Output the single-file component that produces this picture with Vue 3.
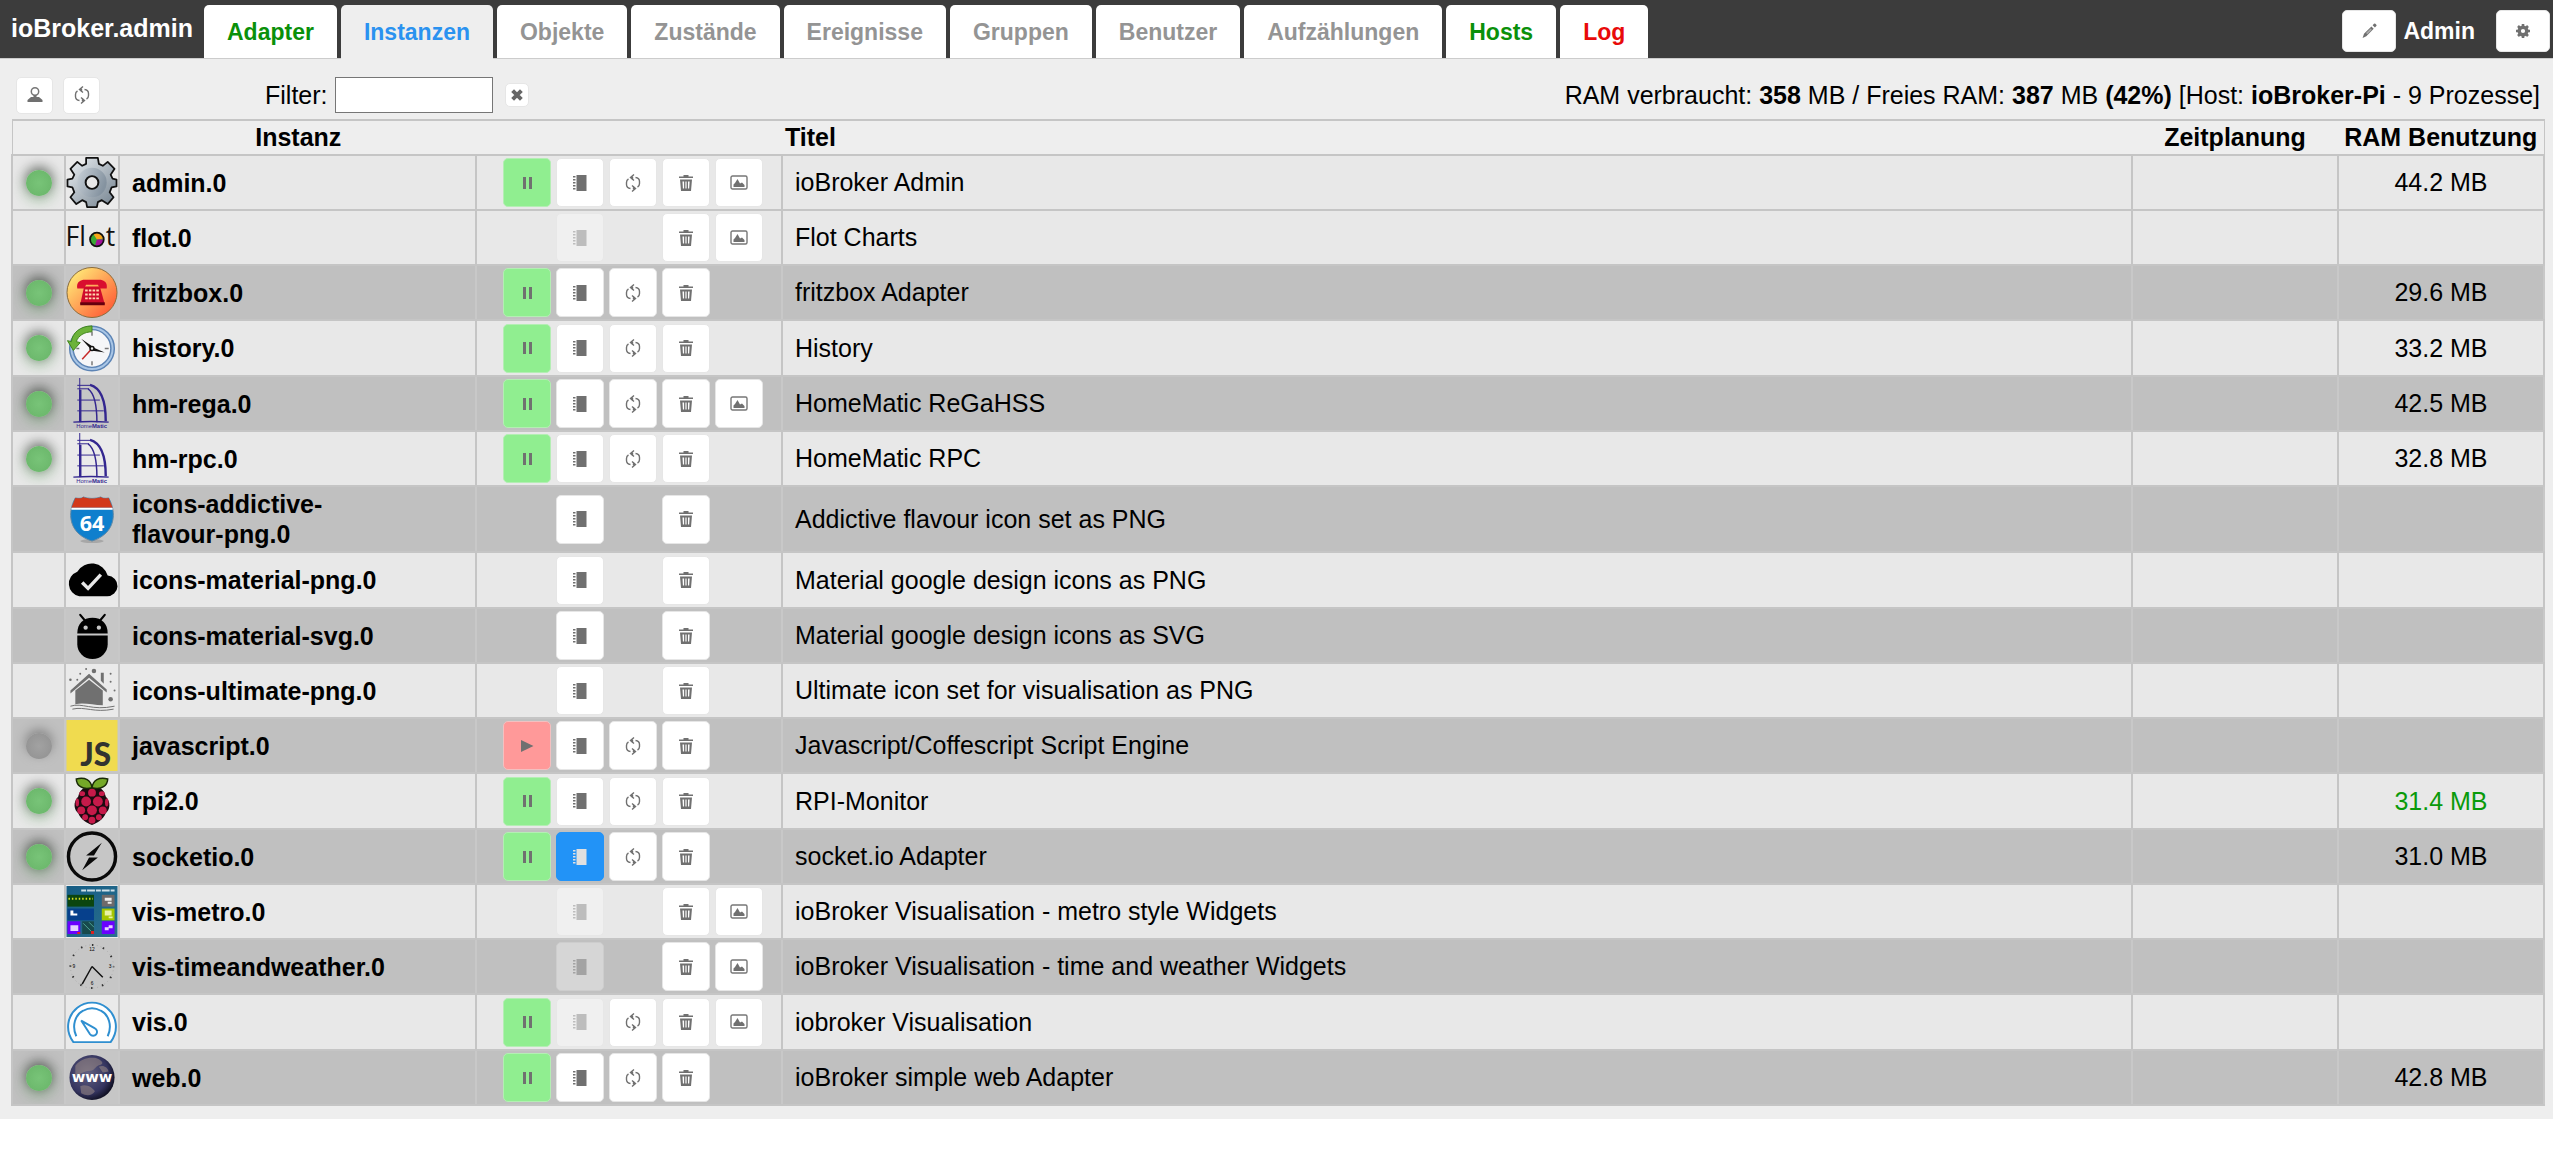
<template>
    <div class="app">
        <header class="topbar">
            <div class="brand">ioBroker.admin</div>
            <nav class="tabs">
                <a v-for="t in tabs" :key="t.name" href="#" class="tab" :class="t.state">{{ t.name }}</a>
            </nav>
            <div class="user">
                <button class="btn top-btn" title="Bearbeiten">
                    <svg class="ico" viewBox="0 0 16 16">
                        <path d="M11.6 2.2L13 .8a1 1 0 0 1 1.4 0l.9.9a1 1 0 0 1 0 1.4l-1.4 1.4zM10.4 3.4l2.3 2.3-7.4 7.5L1.6 15 3 10.8z"/>
                        <path d="M5 10l1.300 1.300 4.500-4.500-1.200-1.200z" fill="#aaa"/>
                    </svg>
                </button>
                <span class="user-name">Admin</span>
                <button class="btn top-btn" title="Einstellungen">
                    <svg class="ico" viewBox="0 0 16 16">
                        <circle cx="8" cy="8" r="3.8" fill="none" stroke="#707070" stroke-width="3.4"/>
                        <path d="M8 1v2.500M8 12.500V15M1 8h2.500M12.500 8H15M3 3l2 2M11 11l2 2M13 3l-2 2M5 11l-2 2" stroke="#707070" stroke-width="2.6"/>
                    </svg>
                </button>
            </div>
        </header>

        <main class="content">
            <div class="toolbar">
                <button class="btn tool-btn" title="Expertenmodus">
                    <svg class="ico" viewBox="0 0 16 16">
                        <circle cx="8" cy="4.5" r="3.7" fill="none" stroke="#777" stroke-width="1.5"/>
                        <path d="M6.500 8h3v2.500h-3zM.5 15v-2L4 10h8l3.500 3v2z"/>
                    </svg>
                </button>
                <button class="btn tool-btn" title="Aktualisieren">
                    <svg class="ico" viewBox="0 0 16 16"><path class="line" :d="refreshPath"/></svg>
                </button>
                <label class="filter-label" for="filter">Filter:</label>
                <input id="filter" v-model="filter" class="filter" type="text">
                <button class="btn clear-btn" title="Filter löschen" @click="filter = ''">
                    <svg class="ico" viewBox="0 0 16 16"><path d="M3 3l10 10M13 3L3 13" stroke="#666" stroke-width="4.5"/></svg>
                </button>
                <div class="ram-info">
                    RAM verbraucht: <b>358</b> MB / Freies RAM: <b>387</b> MB <b>(42%)</b> [Host: <b>ioBroker-Pi</b> - 9 Prozesse]
                </div>
            </div>

            <table class="grid">
                <colgroup>
                    <col class="c-led"><col class="c-icon"><col class="c-name"><col class="c-btns"><col><col class="c-ram"><col class="c-ram">
                </colgroup>
                <thead>
                    <tr>
                        <th colspan="4" class="th-inst">Instanz</th>
                        <th class="th-title">Titel</th>
                        <th>Zeitplanung</th>
                        <th>RAM Benutzung</th>
                    </tr>
                </thead>
                <tbody>
                    <tr v-for="r in visibleRows" :key="r.id" :class="{ dark: r.dark }">
                        <td class="led-cell">
                            <span v-if="r.led" class="led" :class="r.led"></span>
                        </td>
                        <td class="icon-cell">
                            <svg class="logo" viewBox="0 0 52 52">
                                <g v-if="r.icon === 'gear'">
                                    <path d="M20 1h12l1 6 4 2 5-4 7 7-4 6 2 4 4 1v7l-5 1-2 5 4 5-6 7-6-4-4 2-1 5H21l-1-5-4-2-6 4-6-7 4-5-2-5-5-1v-7l5-1 2-4-4-6 7-7 5 4 4-2z" fill="url(#gearFill)" stroke="#111" stroke-width="1.8" stroke-linejoin="round"/>
                                    <circle cx="26" cy="26" r="15" fill="url(#gearDisc)"/>
                                    <circle cx="26" cy="26" r="6.5" fill="#e8e8e8" stroke="#111" stroke-width="2"/>
                                </g>
                                <g v-else-if="r.icon === 'flot'">
                                    <text x="-1" y="35" font-size="27" class="thin">Fl</text>
                                    <text x="40" y="35" font-size="27" class="thin">t</text>
                                    <circle cx="31" cy="28" r="7" fill="#39a935"/>
                                    <path d="M31 28L27 22a7 7 0 0 1 11 5z" fill="#f9a61a"/>
                                    <path d="M31 28h7a7 7 0 0 1-9 6.700z" fill="#a3119b"/>
                                    <circle cx="31" cy="28" r="7" fill="none" stroke="#111" stroke-width="1.8"/>
                                </g>
                                <g v-else-if="r.icon === 'phone'">
                                    <circle cx="26" cy="26" r="25.5" fill="url(#phoneFill)" stroke="#8a6a3a"/>
                                    <path d="M18 20h16l5 18H14z" fill="#cf0c2c"/>
                                    <path d="M14 36h25v3H14z" fill="#65000e"/>
                                    <path d="M11 22c-1-6 2-8 6-9h18c4 1 7 3 6 9h-7l-2-4H20l-2 4z" fill="#d90f2f"/>
                                    <path d="M19 24h14M19 28h14M19 32h14" stroke="#ffd9b0" stroke-width="2" stroke-dasharray="2.6 1.2"/>
                                </g>
                                <g v-else-if="r.icon === 'history'">
                                    <circle cx="26" cy="26" r="21" fill="#f5f6f8" stroke="#5c84b5" stroke-width="5"/>
                                    <circle cx="26" cy="26" r="21" fill="none" stroke="#a9c6e6" stroke-width="2"/>
                                    <path d="M26 3C14 3 6 10 5 19l-4-1 6 10 7-8-4-1c2-6 8-10 16-10z" fill="#6cb33a" stroke="#3e8419"/>
                                    <path d="M26 9v4M26 39v4M39 26h4M10 26h3" stroke="#777" stroke-width="1.5"/>
                                    <path d="M26 26L16 37" stroke="#c62828" stroke-width="1.5"/>
                                    <path d="M15 16l13 9-2 3zM25 24l14 6-14-2z" fill="#111"/>
                                    <circle cx="26" cy="26" r="2" fill="#eee" stroke="#111" stroke-width="1.5"/>
                                </g>
                                <g v-else-if="r.icon === 'homematic'" fill="none" stroke="#33268f">
                                    <path d="M13.500 0v45" stroke-width="1"/>
                                    <path d="M14 12v33" stroke-width="2.5"/>
                                    <path d="M11 7.500h14M11 11h12M11 22.500h23M11 33.500h27"/>
                                    <path d="M24 7c11 3 16 17 16 37" stroke-width="2.5"/>
                                    <path d="M22 11c7 5 9 17 9 34" stroke-width="1.5"/>
                                    <path d="M7 45c12-1 24-1 36 0" stroke-width="1.5"/>
                                    <text x="10" y="50.5" font-size="6" fill="#33268f" stroke="none">Home<tspan font-weight="bold">Matic</tspan></text>
                                </g>
                                <g v-else-if="r.icon === 'shield'">
                                    <ellipse cx="26" cy="48" rx="12" ry="2" fill="#888" opacity=".5"/>
                                    <path d="M9 4c5 1 7 0 8-1 4 2 14 2 18 0 1 1 4 2 8 1 8 14 8 36-17 44C1 40 1 18 9 4z" fill="#0f7fcd" stroke="#5f87a3"/>
                                    <path d="M9 4c5 1 7 0 8-1 4 2 14 2 18 0 1 1 4 2 8 1l4 10H5z" fill="#d2381b"/>
                                    <path d="M5 15h42" stroke="#fff" stroke-width="2"/>
                                    <text x="26" y="38" font-size="22" text-anchor="middle" class="num">64</text>
                                </g>
                                <g v-else-if="r.icon === 'cloud'">
                                    <path d="M42 21A17 17 0 0 0 11 17 13 13 0 0 0 13 42h28a10.500 10.500 0 0 0 1-21z"/>
                                    <path d="M16 28l6 6 13-14" fill="none" stroke="#e8e8e8" stroke-width="3.5"/>
                                </g>
                                <g v-else-if="r.icon === 'android'">
                                    <path d="M11 26h31v9a15.500 15 0 0 1-31 0z"/>
                                    <path d="M11 24c0-10 6-16 15.500-16S42 14 42 24z"/>
                                    <path d="M19 11l-5-6M34 11l5-6" stroke="#000" stroke-width="2.2" stroke-linecap="round"/>
                                    <circle cx="19.5" cy="18" r="2.2" fill="#c8c8c8"/>
                                    <circle cx="33" cy="18" r="2.2" fill="#c8c8c8"/>
                                </g>
                                <g v-else-if="r.icon === 'house'" fill="#707070">
                                    <path d="M23 15L9 26v14c9-2 18 1 28 1V26z"/>
                                    <path d="M4 26L23 9l18 16v3L23 13 4 29zM35 8h3v11l-3-3z"/>
                                    <path d="M4 42c12-4 22 5 45 0M6 45c13-3 22 4 42 0" fill="none" stroke="#707070"/>
                                    <circle cx="28" cy="6" r="2.3"/><circle cx="45" cy="35" r="2.3"/>
                                    <circle cx="4" cy="15" r="1.3"/><circle cx="11" cy="15" r="1"/><circle cx="14" cy="9" r="1"/>
                                    <circle cx="20" cy="4" r="1"/><circle cx="45" cy="9" r="1"/><circle cx="45" cy="17" r="1"/><circle cx="49" cy="26" r="1"/>
                                </g>
                                <g v-else-if="r.icon === 'js'">
                                    <path d="M0 0h52v52H0z" fill="#f0db4f"/>
                                    <text x="14" y="47" font-size="32" class="js">JS</text>
                                </g>
                                <g v-else-if="r.icon === 'rpi'">
                                    <path d="M26 10c8 0 13 5 14 11 6 6 4 14 0 17-3 7-9 10-14 12-5-2-11-5-14-12-4-3-6-11 0-17 1-6 6-11 14-11z" fill="#1b0a10"/>
                                    <path d="M26 12C16 15 10 9 10 3c9-2 15 1 16 9zM26 12c10 3 16-3 16-9-9-2-15 1-16 9z" fill="#75a928" stroke="#1b2b08" stroke-width="1.5"/>
                                    <g fill="#c51a4a">
                                        <circle cx="26" cy="17" r="4"/><circle cx="20" cy="26" r="5"/><circle cx="32" cy="26" r="5"/>
                                        <circle cx="26" cy="35" r="5"/><circle cx="15" cy="35" r="4"/><circle cx="37" cy="35" r="4"/>
                                        <circle cx="26" cy="45" r="3.5"/><circle cx="19" cy="42" r="3"/><circle cx="33" cy="42" r="3"/>
                                        <ellipse cx="16" cy="18" rx="3" ry="2.5"/><ellipse cx="36" cy="18" rx="3" ry="2.5"/>
                                        <ellipse cx="11" cy="27" rx="1.8" ry="4"/><ellipse cx="41" cy="27" rx="1.8" ry="4"/>
                                    </g>
                                </g>
                                <g v-else-if="r.icon === 'socket'">
                                    <circle cx="26" cy="26" r="24" fill="none" stroke="#0a0a0a" stroke-width="3.5"/>
                                    <path d="M36 12L20 25h8zM16 40l16-13h-9z" fill="#0a0a0a"/>
                                </g>
                                <g v-else-if="r.icon === 'metro'">
                                    <path d="M0 0h52v52H0z" fill="url(#metroFill)"/>
                                    <path d="M15 4.500h34" stroke="#cfe0e8" stroke-width="2" stroke-dasharray="5 1 8 1"/>
                                    <path d="M1 9h27v12H1z" fill="#0b4510"/>
                                    <path d="M2 13h25" stroke="#d8e020" stroke-width="2" stroke-dasharray="1.5 2"/>
                                    <path d="M1 23h27v12H1z" fill="#06408c"/>
                                    <path d="M4 25h3v3h4v2H4z" fill="#fff"/>
                                    <path d="M36 9h13v12H36z" fill="#6f6a6a"/>
                                    <path d="M39 12h7v3h-7zM42 16h4v2h-4z" fill="#eee"/>
                                    <path d="M36 23h13v12H36z" fill="#a4c400"/>
                                    <path d="M39 25h7v5h-7zM43 31h4v2h-4z" fill="#e9f2a5"/>
                                    <path d="M1 36h13v13H1zM36 36h13v13H36z" fill="#6a00ff"/>
                                    <path d="M4 40h8v6H4zM39 42h4v3h-4zM43 40h4v3h-4z" fill="#e4d2ff"/>
                                    <path d="M16 36h12v13H16z" fill="#174a4c"/>
                                    <path d="M17 38l9 9M23 37l5 5" stroke="#4fa598"/>
                                    <path d="M11 47h3v2h-3zM25 46h3v3h-3z" fill="#e02020"/>
                                </g>
                                <g v-else-if="r.icon === 'clock'">
                                    <circle cx="26" cy="26" r="22" fill="none" stroke="#aaa" stroke-dasharray="1 3"/>
                                    <circle cx="26" cy="26" r="22" fill="none" stroke="#333" stroke-width="2" stroke-dasharray="1.5 10.02" stroke-dashoffset="0.75"/>
                                    <path d="M26 26L16 44M26 26l11 11" stroke="#111" stroke-width="1.5"/>
                                    <text x="26" y="10" font-size="5" text-anchor="middle">12</text>
                                    <text x="26" y="45" font-size="5" text-anchor="middle">6</text>
                                    <text x="6" y="28" font-size="5">9</text>
                                    <text x="43" y="28" font-size="5">3</text>
                                </g>
                                <g v-else-if="r.icon === 'gauge'" fill="none" stroke="#2f8fd0" stroke-width="2">
                                    <path d="M7 46C-2 34 1 19 11 11a24 24 0 0 1 30 0c10 8 13 23 4 35z" fill="#fff"/>
                                    <path d="M10 40C5 29 9 18 17 14a18 18 0 0 1 18 0c8 4 12 15 7 26"/>
                                    <path d="M15 24l14 8a4 4 0 1 1-5 6z"/>
                                </g>
                                <g v-else-if="r.icon === 'www'">
                                    <circle cx="26" cy="26" r="23" fill="url(#globeFill)"/>
                                    <path d="M9 14c5-7 13-9 21-8 5 2 9 5 5 7-6 1-5 5-10 6-5 0-10 2-16 6zM33 15c5-2 9 1 10 5l-6 1zM14 35c6-3 12 1 15 5-3 5-9 5-14 2z" fill="#9b8b85" opacity=".55"/>
                                    <text x="26" y="31" font-size="15" text-anchor="middle" class="www">www</text>
                                </g>
                            </svg>
                        </td>
                        <td class="name">{{ r.id }}</td>
                        <td>
                            <div class="btns">
                                <template v-for="(b, i) in r.btns" :key="i">
                                    <span v-if="b === '-'" class="slot"></span>
                                    <button v-else class="btn row-btn" :class="btnTypes[b].cls" :disabled="b === 'd'" :title="btnTypes[b].title">
                                        <svg class="ico" viewBox="0 0 16 16">
                                            <path v-if="btnTypes[b].icon === 'pause'" d="M4 2h3v12H4zM10 2h3v12h-3z"/>
                                            <path v-else-if="btnTypes[b].icon === 'play'" d="M2 2l12.500 6L2 14z"/>
                                            <path v-else-if="btnTypes[b].icon === 'book'" d="M4.500 0h10v16h-10zM1 1h2.500v1.500H1zM1 4h2.500v1.500H1zM1 7h2.500v1.500H1zM1 10h2.500v1.500H1zM1 13h2.500v1.500H1z"/>
                                            <path v-else-if="btnTypes[b].icon === 'refresh'" class="line" :d="refreshPath"/>
                                            <path v-else-if="btnTypes[b].icon === 'trash'" fill-rule="evenodd" d="M1 1.500h4.500V0h5v1.500H15V3H1zM2 4.500h12L13 16H3zM4.500 6.500l.4 7h1.200v-7zM7.400 6.500v7h1.200v-7zM10 6.500v7h1.200l.4-7z"/>
                                            <template v-else>
                                                <rect x="0" y="1" width="16" height="13" rx="1.5" fill="none" stroke="#777" stroke-width="1.4"/>
                                                <path d="M2.500 12V9.500L4 8l2.500-4 2.500 4.500 2-1L13.500 10v2z"/>
                                            </template>
                                        </svg>
                                    </button>
                                </template>
                            </div>
                        </td>
                        <td class="title">{{ r.title }}</td>
                        <td></td>
                        <td class="ram" :class="{ changed: r.changed }">{{ r.ram }}</td>
                    </tr>
                </tbody>
            </table>
        </main>

        <svg class="defs" width="0" height="0" aria-hidden="true">
            <defs>
                <linearGradient id="gearFill" x1="0" y1="0" x2="1" y2="1">
                    <stop offset="0" stop-color="#eef2f5"/><stop offset="1" stop-color="#71808d"/>
                </linearGradient>
                <linearGradient id="gearDisc" x1="0" y1="0" x2="1" y2="0.4">
                    <stop offset="0" stop-color="#c9d1d8"/><stop offset="1" stop-color="#8593a0"/>
                </linearGradient>
                <linearGradient id="phoneFill" x1="0" y1="0" x2="1" y2="1">
                    <stop offset="0.15" stop-color="#ffe173"/><stop offset="0.9" stop-color="#ff5a35"/>
                </linearGradient>
                <linearGradient id="metroFill" x1="0" y1="0" x2="1" y2="1">
                    <stop offset="0" stop-color="#155c84"/><stop offset="1" stop-color="#2a6f8e"/>
                </linearGradient>
                <radialGradient id="globeFill" cx="0.4" cy="0.4" r="0.65">
                    <stop offset="0" stop-color="#626080"/><stop offset="0.7" stop-color="#34345f"/><stop offset="1" stop-color="#0c0c1c"/>
                </radialGradient>
            </defs>
        </svg>
    </div>
</template>

<script setup>
import {computed, ref} from 'vue'

const filter = ref('')

const tabs = [
    {name: 'Adapter', state: 'ok'},
    {name: 'Instanzen', state: 'active'},
    {name: 'Objekte'},
    {name: 'Zustände'},
    {name: 'Ereignisse'},
    {name: 'Gruppen'},
    {name: 'Benutzer'},
    {name: 'Aufzählungen'},
    {name: 'Hosts', state: 'ok'},
    {name: 'Log', state: 'error'}
]

const refreshPath = 'M9 -.5L5.500 2.500 9 5.500M6 2.500H7.500V5M10.500 2.500Q14.500 3 14.500 6.500V8.500Q14.500 11 12.500 12M7 10.500l3.500 3L7 16.500M10 13.500H8.500V11M5.500 13.500Q1.500 13 1.500 9.500V7.500Q1.500 5 3.500 4'

// p = pause, s = start, c = config, d = config disabled, h = config hovered,
// r = reload, t = delete, l = open link, - = empty slot
const btnTypes = {
    p: {icon: 'pause', cls: 'green', title: 'Stoppen'},
    s: {icon: 'play', cls: 'red', title: 'Starten'},
    c: {icon: 'book', title: 'Konfigurieren'},
    d: {icon: 'book', cls: 'disabled', title: 'Konfigurieren'},
    h: {icon: 'book', cls: 'blue', title: 'Konfigurieren'},
    r: {icon: 'refresh', title: 'Neu starten'},
    t: {icon: 'trash', title: 'Löschen'},
    l: {icon: 'image', title: 'Öffnen'}
}

const rows = [
    {id: 'admin.0', icon: 'gear', led: 'on', btns: 'pcrtl', title: 'ioBroker Admin', ram: '44.2 MB'},
    {id: 'flot.0', icon: 'flot', btns: '-d-tl', title: 'Flot Charts'},
    {id: 'fritzbox.0', icon: 'phone', led: 'on', btns: 'pcrt', title: 'fritzbox Adapter', ram: '29.6 MB', dark: true},
    {id: 'history.0', icon: 'history', led: 'on', btns: 'pcrt', title: 'History', ram: '33.2 MB'},
    {id: 'hm-rega.0', icon: 'homematic', led: 'on', btns: 'pcrtl', title: 'HomeMatic ReGaHSS', ram: '42.5 MB', dark: true},
    {id: 'hm-rpc.0', icon: 'homematic', led: 'on', btns: 'pcrt', title: 'HomeMatic RPC', ram: '32.8 MB'},
    {id: 'icons-addictive-flavour-png.0', icon: 'shield', btns: '-c-t', title: 'Addictive flavour icon set as PNG', dark: true},
    {id: 'icons-material-png.0', icon: 'cloud', btns: '-c-t', title: 'Material google design icons as PNG'},
    {id: 'icons-material-svg.0', icon: 'android', btns: '-c-t', title: 'Material google design icons as SVG', dark: true},
    {id: 'icons-ultimate-png.0', icon: 'house', btns: '-c-t', title: 'Ultimate icon set for visualisation as PNG'},
    {id: 'javascript.0', icon: 'js', led: 'off', btns: 'scrt', title: 'Javascript/Coffescript Script Engine', dark: true},
    {id: 'rpi2.0', icon: 'rpi', led: 'on', btns: 'pcrt', title: 'RPI-Monitor', ram: '31.4 MB', changed: true},
    {id: 'socketio.0', icon: 'socket', led: 'on', btns: 'phrt', title: 'socket.io Adapter', ram: '31.0 MB', dark: true},
    {id: 'vis-metro.0', icon: 'metro', btns: '-d-tl', title: 'ioBroker Visualisation - metro style Widgets'},
    {id: 'vis-timeandweather.0', icon: 'clock', btns: '-d-tl', title: 'ioBroker Visualisation - time and weather Widgets', dark: true},
    {id: 'vis.0', icon: 'gauge', btns: 'pdrtl', title: 'iobroker Visualisation'},
    {id: 'web.0', icon: 'www', led: 'on', btns: 'pcrt', title: 'ioBroker simple web Adapter', ram: '42.8 MB', dark: true}
]

const visibleRows = computed(() => {
    const f = filter.value.trim().toLowerCase()
    if (!f) return rows
    return rows.filter(r => r.id.toLowerCase().includes(f) || r.title.toLowerCase().includes(f))
})
</script>

<style>
body {
    margin: 0;
    background: #ffffff;
}
</style>

<style scoped>
.app {
    font-family: "Liberation Sans", Arial, sans-serif;
    font-size: 25px;
    color: #000;
    background: #eeeeee;
}

.topbar {
    display: flex;
    height: 58px;
    background: #3c3c3c;
    border-bottom: 1px solid #cccccc;
}

.brand {
    padding: 14px 11px 0 11px;
    line-height: 28px;
    font-weight: bold;
    color: #fff;
}

.tabs {
    display: flex;
    gap: 4px;
    padding-top: 5px;
}

.tab {
    box-sizing: border-box;
    height: 53px;
    padding: 0 23px;
    line-height: 54px;
    border-radius: 5px 5px 0 0;
    background: #fff;
    color: #949494;
    font-size: 23px;
    font-weight: bold;
    text-decoration: none;
}

.tab.active {
    height: 54px;
    background: #eee;
    color: #2a92f0;
}

.tab.ok {
    color: #0a900a;
}

.tab.error {
    color: #e80a0a;
}

.user {
    display: flex;
    align-items: center;
    margin-left: auto;
    padding-right: 3px;
    padding-top: 4px;
}

.user-name {
    margin: 0 21px 0 7px;
    color: #fff;
    font-size: 23px;
    font-weight: bold;
}

.btn {
    display: flex;
    align-items: center;
    justify-content: center;
    box-sizing: border-box;
    padding: 0;
    border: 1px solid #e6e6e6;
    border-radius: 5px;
    background: #fff;
}

.ico {
    width: 16px;
    height: 16px;
    overflow: visible;
    fill: #707070;
}

.line {
    fill: none;
    stroke: #707070;
    stroke-width: 1.4;
}

.top-btn {
    width: 54px;
    height: 42px;
}

.content {
    padding: 0 8px 13px 11px;
}

.toolbar {
    display: flex;
    align-items: center;
    height: 60px;
    box-sizing: border-box;
    padding: 12px 5px 0 5px;
}

.tool-btn {
    width: 37px;
    height: 37px;
    margin-right: 10px;
}

.filter-label {
    margin-left: 155px;
}

.filter {
    box-sizing: border-box;
    width: 158px;
    height: 36px;
    margin: 0 12px 0 7px;
    border: 1px solid #767676;
    background: #fff;
    font: inherit;
}

.clear-btn {
    width: 24px;
    height: 24px;
}

.clear-btn .ico {
    width: 14px;
    height: 14px;
}

.ram-info {
    margin-left: auto;
}

.grid {
    width: 100%;
    table-layout: fixed;
    border-collapse: collapse;
    border: 1px solid #c5c5c5;
    border-top: 2px solid #c5c5c5;
}

.c-led {
    width: 53px;
}

.c-icon {
    width: 54px;
}

.c-name {
    width: 357px;
}

.c-btns {
    width: 306px;
}

.c-ram {
    width: 206px;
}

th,
td {
    box-sizing: border-box;
}

th {
    height: 35px;
    padding: 0 0 2px;
    line-height: 28px;
    white-space: nowrap;
}

.th-inst {
    padding-right: 198px;
}

.th-title {
    padding-left: 3px;
    text-align: left;
}

td {
    height: 55px;
    padding: 0;
    border: 2px solid #c5c5c5;
    background: #e8e8e8;
}

tr:nth-child(4n) td {
    height: 56px;
}

.dark td {
    background: #c0c0c0;
    border-left-color: #c8c8c8;
    border-right-color: #c8c8c8;
}

.dark td:first-child {
    border-left-color: #c5c5c5;
}

.led-cell {
    overflow: hidden;
}

.led {
    display: block;
    width: 26px;
    height: 26px;
    margin: 0 auto;
    border-radius: 50%;
}

.led.on {
    background: radial-gradient(#78c478, #68b468);
    box-shadow: 0 -3px 13px 0 rgba(0, 0, 0, .55), 0 5px 14px 1px rgba(60, 160, 60, .25);
}

.led.off {
    background: radial-gradient(#a2a2a2, #909090);
    box-shadow: 0 -3px 12px 0 rgba(0, 0, 0, .35), 0 4px 12px rgba(255, 255, 255, .15);
}

.icon-cell {
    background: #eaeaea;
}

.dark .icon-cell {
    background: #c6c6c6;
}

.logo {
    display: block;
    width: 52px;
    height: 51px;
    margin: 0 auto;
    overflow: visible;
}

.thin {
    font-family: "Open Sans", sans-serif;
    fill: #111;
}

.num {
    font-family: "Open Sans", sans-serif;
    font-weight: bold;
    fill: #fff;
}

.js {
    font-family: Lato, sans-serif;
    font-weight: 900;
    fill: #323330;
}

.www {
    font-family: "DejaVu Sans", sans-serif;
    font-weight: bold;
    fill: #fff;
}

.name {
    padding: 2px 80px 2px 12px;
    font-weight: bold;
    line-height: 30px;
}

.btns {
    display: flex;
    gap: 5px;
    padding-left: 26px;
}

.slot,
.row-btn {
    width: 48px;
    height: 49px;
}

.row-btn.green {
    background: #90ee90;
    border-color: #b4eeb4;
}

.row-btn.red {
    background: #ff9999;
    border-color: #f3c0c0;
}

.row-btn.blue {
    background: #2293f7;
    border-color: #2293f7;
}

.row-btn.blue .ico {
    fill: #e0e0e0;
}

.row-btn.disabled {
    opacity: .35;
}

.title {
    padding-left: 12px;
}

.ram {
    text-align: center;
}

.ram.changed {
    color: #0a9a0a;
}

.defs {
    display: block;
}
</style>
